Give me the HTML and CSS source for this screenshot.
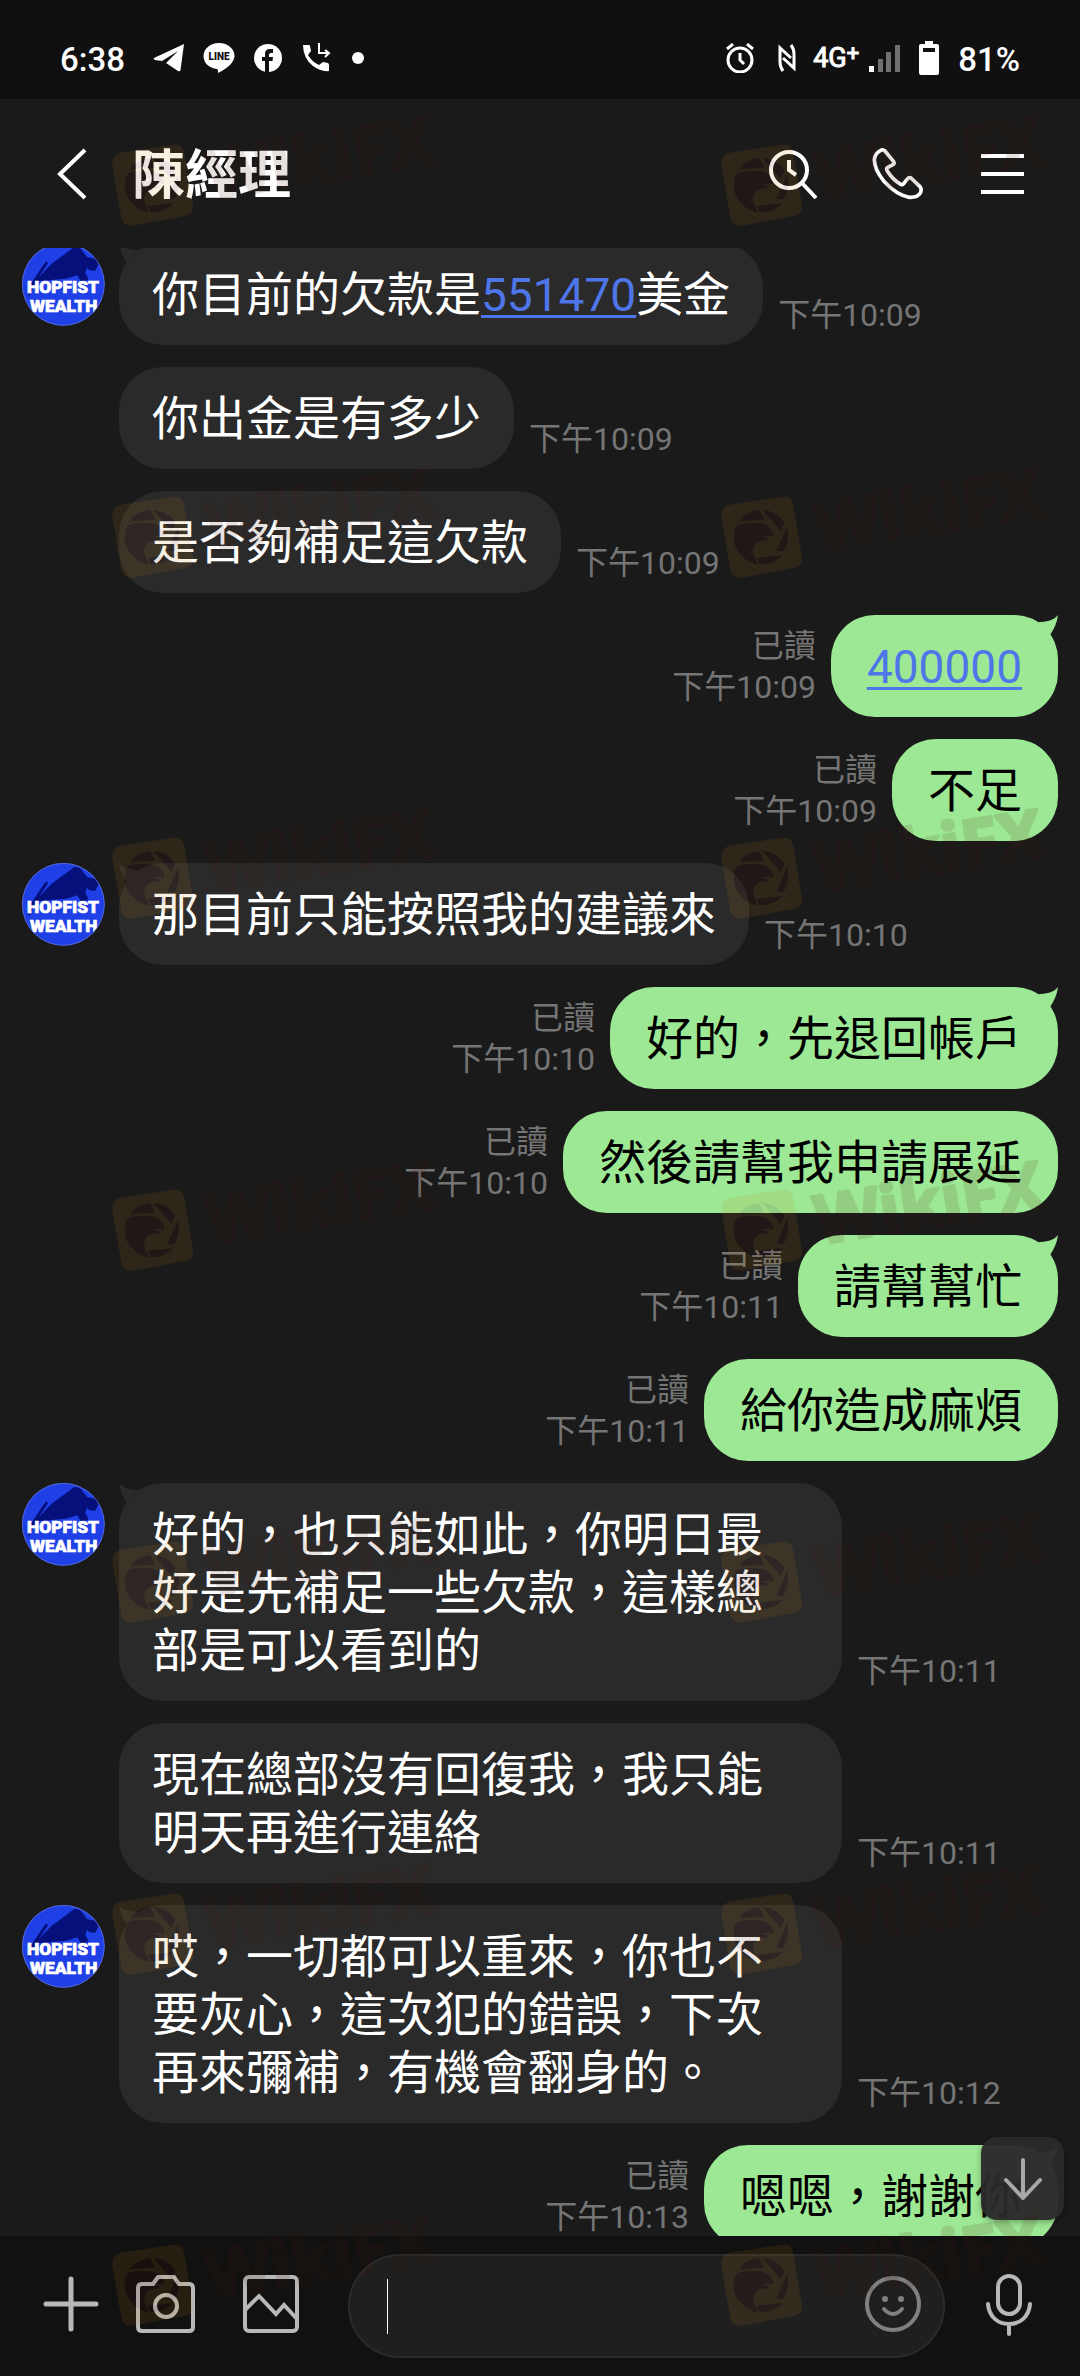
FILE: index.html
```html
<!DOCTYPE html>
<html lang="zh-Hant">
<head>
<meta charset="utf-8">
<meta name="viewport" content="width=device-width, initial-scale=1">
<title>陳經理</title>
<link rel="stylesheet" href="styles.css">
</head>
<body>
<svg class="defs" aria-hidden="true">
  <defs>
    <symbol id="avatar" viewBox="18 15 249 249">
      <clipPath id="disc"><circle cx="142" cy="139" r="124"/></clipPath>
      <g clip-path="url(#disc)">
        <rect x="18" y="15" width="249" height="249" fill="#1f40e6"/>
        <path fill="#06107a" d="M68 118L106 78L176 26L192 30L214 58L248 64L247 82L236 100L218 95L214 88L208 104L218 124L196 132L184 112L150 122L60 130L38 176L36 150L84 78L92 70L96 76L68 118Z"/>
        <g class="avatar-text" text-anchor="middle">
          <text x="141" y="165">HOPFIST</text>
          <text x="143" y="223">WEALTH</text>
        </g>
      </g>
      <circle cx="142" cy="139" r="123" fill="none" stroke="#6f7fd8" stroke-width="2"/>
    </symbol>
    <symbol id="mark" viewBox="0 0 1020 300" overflow="visible">
      <path fill="#c98f1a" fill-opacity=".12" fill-rule="evenodd" d="M50 110L208 86Q234 83 240 108L267 268Q270 292 246 299L86 329Q59 332 52 306L25 148Q22 118 50 110Z
        M78 160Q98 130 138 126L154 155Z
        M148 126Q190 128 214 163L204 190Z
        M222 176Q232 212 212 248L190 249Z
        M208 261Q182 290 140 289L131 270Z
        M72 172Q100 160 150 168Q178 176 181 206L168 202L142 207L168 210L164 217Q140 214 126 230Q114 248 126 270L134 290Q104 284 86 262L74 250Q62 232 62 202L72 195L62 198Q64 182 72 172Z"/>
      <g fill="#461205" fill-opacity=".12">
        <path d="M78 160Q98 130 138 126L154 155Z"/>
        <path d="M148 126Q190 128 214 163L204 190Z"/>
        <path d="M222 176Q232 212 212 248L190 249Z"/>
        <path d="M208 261Q182 290 140 289L131 270Z"/>
        <path fill-rule="evenodd" d="M72 172Q100 160 150 168Q178 176 181 206L168 202L142 207L168 210L164 217Q140 214 126 230Q114 248 126 270L134 290Q104 284 86 262L74 250Q62 232 62 202L72 195L62 198Q64 182 72 172ZM118 187L140 188L130 195Z"/>
      </g>
      <text class="mark-text" x="318" y="250" transform="rotate(-9 318 250)">WikiFX</text>
    </symbol>
  </defs>
</svg>

<div class="phone">
  <div class="status">
    <div class="status-left">
      <span class="status-text">6:38</span>
      <svg width="32" height="30" viewBox="0 0 32 30" fill="#fff"><path d="M31 1L1 15Q0 16 2 17L9 18L25 8L13 20L25 28Q27 29 27.500 27Z"/></svg>
      <svg width="32" height="30" viewBox="0 0 32 30" fill="#fff"><path d="M16 0C7 0 .5 6 .5 13C.5 20 6 25 14 26Q15 26 15 30Q31 22 31.500 13C31.500 6 25 0 16 0Z"/><text class="line-text" x="16" y="17" text-anchor="middle">LINE</text></svg>
      <svg width="30" height="30" viewBox="0 0 30 30"><circle cx="15" cy="15" r="14" fill="#fff"/><path fill="#101010" d="M12 29V18H9V14H12V11Q12 6 17 6H20V10H18Q16 10 16 12V14H20L19.500 18H16V29Z"/></svg>
      <svg width="30" height="30" viewBox="0 0 30 30"><path fill="#fff" d="M2 2H8Q9 2 9 3L10 8L7 12Q11 19 18 22L22 19L27 20Q28 21 28 22V28Q20 29 12 23Q2 15 2 2Z"/><path d="M18 0V10H28M24 7L28 10L24 14" fill="none" stroke="#fff" stroke-width="2"/></svg>
      <i class="dot"></i>
    </div>
    <div class="status-right">
      <svg width="30" height="30" viewBox="0 0 30 30" fill="none" stroke="#fff" stroke-width="3"><circle cx="15" cy="17" r="12"/><path d="M15 10V17L19 21M2 6L8 1M22 1L28 6"/></svg>
      <svg class="nfc" width="20" height="30" viewBox="0 0 20 30" fill="none" stroke="#fff" stroke-width="3"><path d="M6 28Q3 24 3 19V5L14 15M14 2Q17 6 17 11V25L6 15"/></svg>
      <span class="network">4G<sup>+</sup></span>
      <svg class="signal" width="32" height="30" viewBox="0 0 32 30"><path fill="#fff" d="M0 23H5V29H0Z"/><path fill="#707070" d="M9 16H14V29H9ZM17 9H22V29H17ZM26 2H31V29H26Z"/></svg>
      <svg class="battery" width="22" height="34" viewBox="0 0 22 34"><path fill="#fff" fill-rule="evenodd" d="M7 0H15V3H19Q21 3 21 5V32Q21 34 19 34H3Q1 34 1 32V5Q1 3 3 3H7ZM5 7V11H17V7Z"/></svg>
      <span class="status-text">81%</span>
    </div>
  </div>

  <header class="header">
    <button class="icon-button" aria-label="返回"><svg width="32" height="54" viewBox="0 0 32 54" fill="none" stroke="#fff" stroke-width="4"><path d="M29 3L4 27L29 51"/></svg></button>
    <h1 class="title">陳經理</h1>
    <div class="header-actions">
      <button class="icon-button" aria-label="搜尋"><svg width="54" height="54" viewBox="0 0 54 54" fill="none" stroke="#fff" stroke-width="4"><circle cx="23" cy="23" r="18"/><path d="M36 36L50 51M23 13V23L30 28"/></svg></button>
      <button class="icon-button" aria-label="通話"><svg width="54" height="54" viewBox="33 20 162 162" fill="none" stroke="#fff" stroke-width="11" stroke-linejoin="round"><path d="M61 31Q68 26 75 32L101 64Q104 70 99 73L82 82Q78 86 82 92Q98 118 122 132Q128 135 131 130L143 115Q147 110 153 113L180 139Q186 147 181 158Q172 172 148 171Q110 165 72 123Q42 85 43 57Q46 38 61 31Z"/></svg></button>
      <button class="icon-button" aria-label="選單"><svg width="54" height="54" viewBox="0 0 54 54" fill="none" stroke="#fff" stroke-width="4"><path d="M5 9H48M5 27H48M5 45H48"/></svg></button>
    </div>
  </header>

  <main class="chat">
    <div class="row"><svg class="avatar"><use href="#avatar"/></svg><p class="bubble tail">你目前的欠款是<a href="#">551470</a>美金</p><span class="meta">下午10:09</span></div>
    <div class="row"><p class="bubble follow">你出金是有多少</p><span class="meta">下午10:09</span></div>
    <div class="row"><p class="bubble follow">是否夠補足這欠款</p><span class="meta">下午10:09</span></div>
    <div class="row mine"><span class="meta">已讀<br>下午10:09</span><p class="bubble tail"><a href="#">400000</a></p></div>
    <div class="row mine"><span class="meta">已讀<br>下午10:09</span><p class="bubble">不足</p></div>
    <div class="row"><svg class="avatar"><use href="#avatar"/></svg><p class="bubble tail">那目前只能按照我的建議來</p><span class="meta">下午10:10</span></div>
    <div class="row mine"><span class="meta">已讀<br>下午10:10</span><p class="bubble tail">好的，先退回帳戶</p></div>
    <div class="row mine"><span class="meta">已讀<br>下午10:10</span><p class="bubble">然後請幫我申請展延</p></div>
    <div class="row mine"><span class="meta">已讀<br>下午10:11</span><p class="bubble tail">請幫幫忙</p></div>
    <div class="row mine"><span class="meta">已讀<br>下午10:11</span><p class="bubble">給你造成麻煩</p></div>
    <div class="row"><svg class="avatar"><use href="#avatar"/></svg><p class="bubble tail">好的，也只能如此，你明日最好是先補足一些欠款，這樣總部是可以看到的</p><span class="meta">下午10:11</span></div>
    <div class="row"><p class="bubble follow">現在總部沒有回復我，我只能明天再進行連絡</p><span class="meta">下午10:11</span></div>
    <div class="row"><svg class="avatar"><use href="#avatar"/></svg><p class="bubble tail">哎，一切都可以重來，你也不要灰心，這次犯的錯誤，下次再來彌補，有機會翻身的。</p><span class="meta">下午10:12</span></div>
    <div class="row mine"><span class="meta">已讀<br>下午10:13</span><p class="bubble tail">嗯嗯，謝謝你</p></div>
    <button class="scroll-down" aria-label="捲到最新訊息"><svg width="42" height="46" viewBox="0 0 42 46" fill="none" stroke="#a8a8a8" stroke-width="4" stroke-linecap="round" stroke-linejoin="round"><path d="M21 4V42M4 24L21 42L38 24"/></svg></button>
  </main>

  <footer class="composer">
    <button class="icon-button" aria-label="更多"><svg width="60" height="60" viewBox="0 0 60 60" fill="none" stroke="#b8b8b8" stroke-width="5" stroke-linecap="round"><path d="M30 5V55M5 30H55"/></svg></button>
    <button class="icon-button" aria-label="相機"><svg width="60" height="60" viewBox="0 0 60 60" fill="none" stroke="#b8b8b8" stroke-width="4" stroke-linejoin="round"><path d="M6 10H17L22 3H38L43 10H53Q57 10 57 14V53Q57 57 53 57H6Q2 57 2 53V14Q2 10 6 10Z"/><circle cx="30" cy="32" r="11"/></svg></button>
    <button class="icon-button picture" aria-label="相簿"><svg width="60" height="60" viewBox="0 0 60 60" fill="none" stroke="#b8b8b8" stroke-width="4"><rect x="4" y="3" width="52" height="54" rx="4"/><path d="M4 36L18 22L35 40L43 31L56 45"/></svg></button>
    <div class="field">
      <i class="caret"></i>
      <input class="field-input" type="text" aria-label="輸入訊息">
      <button class="icon-button" aria-label="貼圖"><svg width="56" height="56" viewBox="0 0 56 56" fill="none" stroke="#808080" stroke-width="4" stroke-linecap="round"><circle cx="28" cy="28" r="26"/><path d="M19 33Q28 43 37 33"/><g fill="#808080" stroke="none"><circle cx="20" cy="23" r="3"/><circle cx="36" cy="23" r="3"/></g></svg></button>
    </div>
    <button class="icon-button" aria-label="語音"><svg width="50" height="64" viewBox="0 0 50 64" fill="none" stroke="#b8b8b8" stroke-width="4" stroke-linecap="round"><rect x="14" y="4" width="22" height="38" rx="11"/><path d="M4 32C5 45 14 52 25 52C36 52 45 45 46 32M25 52V62"/></svg></button>
  </footer>

  <svg class="watermarks" aria-hidden="true">
    <use href="#mark" x="104" y="116" width="340" height="100"/><use href="#mark" x="713" y="116" width="340" height="100"/>
    <use href="#mark" x="104" y="468" width="340" height="100"/><use href="#mark" x="713" y="468" width="340" height="100"/>
    <use href="#mark" x="104" y="809" width="340" height="100"/><use href="#mark" x="713" y="809" width="340" height="100"/>
    <use href="#mark" x="104" y="1161" width="340" height="100"/><use href="#mark" x="713" y="1161" width="340" height="100"/>
    <use href="#mark" x="104" y="1513" width="340" height="100"/><use href="#mark" x="713" y="1513" width="340" height="100"/>
    <use href="#mark" x="104" y="1865" width="340" height="100"/><use href="#mark" x="713" y="1865" width="340" height="100"/>
    <use href="#mark" x="104" y="2216" width="340" height="100"/><use href="#mark" x="713" y="2216" width="340" height="100"/>
  </svg>
</div>
</body>
</html>
```
FILE: styles.css
```css
* { box-sizing: border-box; }

body {
  margin: 0;
  background: #1a1a1a;
  color: #fff;
  font-family: Roboto, "Noto Sans CJK TC", sans-serif;
}

svg { display: block; flex: none; }
.defs { position: absolute; width: 0; height: 0; }

.phone {
  position: relative;
  display: flex;
  flex-direction: column;
  height: 100vh;
  overflow: hidden;
}

/* Status bar */
.status {
  display: flex;
  justify-content: space-between;
  flex: none;
  height: 99px;
  padding: 16px 60px 0;
  background: #101010;
}
.status-left, .status-right { display: flex; align-items: center; }
.status-left { gap: 18px; }
.status-left .status-text { margin-right: 10px; }
.status-text { font-size: 33px; font-weight: 500; line-height: 40px; padding-top: 4px; }
.line-text { font-size: 10px; font-weight: 900; fill: #101010; }
.dot { width: 12px; height: 12px; margin-left: 3px; border-radius: 50%; background: #fff; }
.network { font-size: 27px; line-height: 32px; font-weight: 400; margin: 0 10px 0 16px; display: flex; -webkit-text-stroke: 1px #fff; }
.network sup { font-size: 22px; line-height: 24px; }
.nfc { margin-left: 22px; }
.battery { margin: 0 18px 0 17px; }

/* Chat header */
.icon-button {
  flex: none;
  padding: 0;
  border: 0;
  background: none;
  color: inherit;
}
.header {
  display: flex;
  align-items: center;
  flex: none;
  height: 149px;
  padding: 0 50px 0 56px;
}
.title { flex: 1; margin: 0 0 0 44px; padding-top: 4px; font-size: 53px; line-height: 60px; font-weight: 700; }
.header-actions { display: flex; gap: 51px; }

/* Messages */
.chat {
  position: relative;
  flex: 1;
  min-height: 0;
  overflow: hidden;
  padding: 0 22px;
}
.row { display: flex; margin-bottom: 22px; }
.row:first-child { margin-top: -5px; }
.row.mine { justify-content: flex-end; }
.avatar { width: 83px; height: 83px; margin-right: 14px; }
.avatar-text { font-size: 52px; font-weight: 900; fill: #fff; stroke: #fff; stroke-width: 2; }

.bubble {
  position: relative;
  max-width: 723px;
  margin: 0;
  padding: 23px 33px 21px;
  border-radius: 44px;
  background: #2a2a2a;
  font-size: 47px;
  line-height: 58px;
}
.bubble.follow { margin-left: 97px; }
.mine .bubble { padding: 23px 36px 21px; background: #9de894; color: #000; }
.bubble.tail::before {
  content: "";
  position: absolute;
  top: 0;
  left: 0;
  width: 20px;
  height: 20px;
  background: inherit;
  clip-path: path("M0 0C5 6 12 7 20 7L8 20C4 14 1 8 0 0Z");
}
.mine .bubble.tail::before { left: auto; right: 0; transform: scaleX(-1); }
.bubble a {
  color: #4f76e8;
  font-size: 46px;
  text-decoration-thickness: 3px;
  text-underline-offset: 4px;
}

.meta {
  align-self: flex-end;
  flex: none;
  padding: 0 15px 9px;
  color: #757575;
  font-size: 32px;
  line-height: 41px;
}
.mine .meta { text-align: right; }

.scroll-down {
  position: absolute;
  right: 16px;
  bottom: 16px;
  display: grid;
  place-items: center;
  width: 83px;
  height: 83px;
  padding: 0;
  border: 0;
  border-radius: 16px;
  background: rgba(42, 42, 42, .96);
  box-shadow: 0 2px 6px rgba(0, 0, 0, .3);
}

/* Message composer */
.composer {
  display: flex;
  align-items: center;
  flex: none;
  height: 140px;
  padding: 0 46px 0 41px;
  background: #111;
}
.composer .icon-button { margin-bottom: 4px; }
.composer .icon-button + .icon-button { margin-left: 35px; }
.composer .icon-button.picture { margin-left: 45px; }
.field {
  display: flex;
  align-items: center;
  flex: 1;
  min-width: 0;
  height: 104px;
  margin: 0 39px 0 47px;
  padding: 0 22px 0 37px;
  border: 2px solid #2b2b2b;
  border-radius: 52px;
  background: #1f1f1f;
}
.caret { width: 1px; height: 55px; background: #fff; }
.field-input {
  flex: 1;
  min-width: 0;
  height: 58px;
  padding: 0;
  border: 0;
  outline: 0;
  background: none;
  color: #fff;
  font: inherit;
  font-size: 47px;
}

/* Watermark overlay */
.watermarks {
  position: absolute;
  top: 0;
  left: 0;
  width: 100%;
  height: 100%;
  pointer-events: none;
}
.mark-text {
  font-family: "Open Sans", sans-serif;
  font-size: 202px;
  font-weight: 700;
  fill: #461205;
  stroke: #461205;
  stroke-width: 10;
  stroke-linejoin: round;
  opacity: .12;
}
```
